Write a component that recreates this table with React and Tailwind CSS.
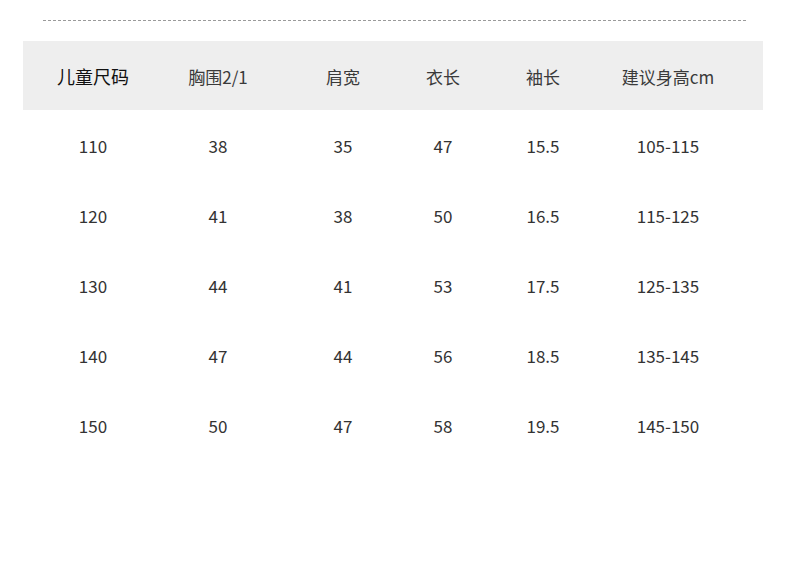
import React from 'react';

const cols = ['w-[140px]', 'w-[110px]', 'w-[140px]', 'w-[60px]', 'w-[140px]', 'w-[110px]'];

const headers = ['儿童尺码', '胸围2/1', '肩宽', '衣长', '袖长', '建议身高cm'];

const rows = [
  ['110', '38', '35', '47', '15.5', '105-115'],
  ['120', '41', '38', '50', '16.5', '115-125'],
  ['130', '44', '41', '53', '17.5', '125-135'],
  ['140', '47', '44', '56', '18.5', '135-145'],
  ['150', '50', '47', '58', '19.5', '145-150'],
];

export default function App() {
  return (
    <div className="w-[790px] h-[569px] bg-white text-[#333] font-['Noto_Sans_CJK_SC','Noto_Sans',sans-serif] overflow-hidden">
      {/* dashed rule at the top */}
      <div className="pt-[20px] pl-[43px]">
        <div className="w-[703px] border-t border-dashed border-[#9a9a9a]"></div>
      </div>

      <div className="mt-[20px] ml-[23px] w-[740px]">
        {/* Header band */}
        <div className="flex items-center h-[69px] pt-[2px] bg-[#eeeeee]">
          {headers.map((h, i) => (
            <div
              key={h}
              className={`${cols[i]} shrink-0 text-center ${i === 0 ? 'text-[18px] text-[#111]' : 'text-[17px] text-[#3a3a3a]'}`}
            >
              {h}
            </div>
          ))}
        </div>

        {/* Data rows */}
        {rows.map((r) => (
          <div key={r[0]} className="flex items-center h-[70px] pt-[2px]">
            {r.map((v, i) => (
              <div key={i} className={`${cols[i]} shrink-0 text-center text-[17px] text-[#333]`}>
                {v}
              </div>
            ))}
          </div>
        ))}
      </div>
    </div>
  );
}
